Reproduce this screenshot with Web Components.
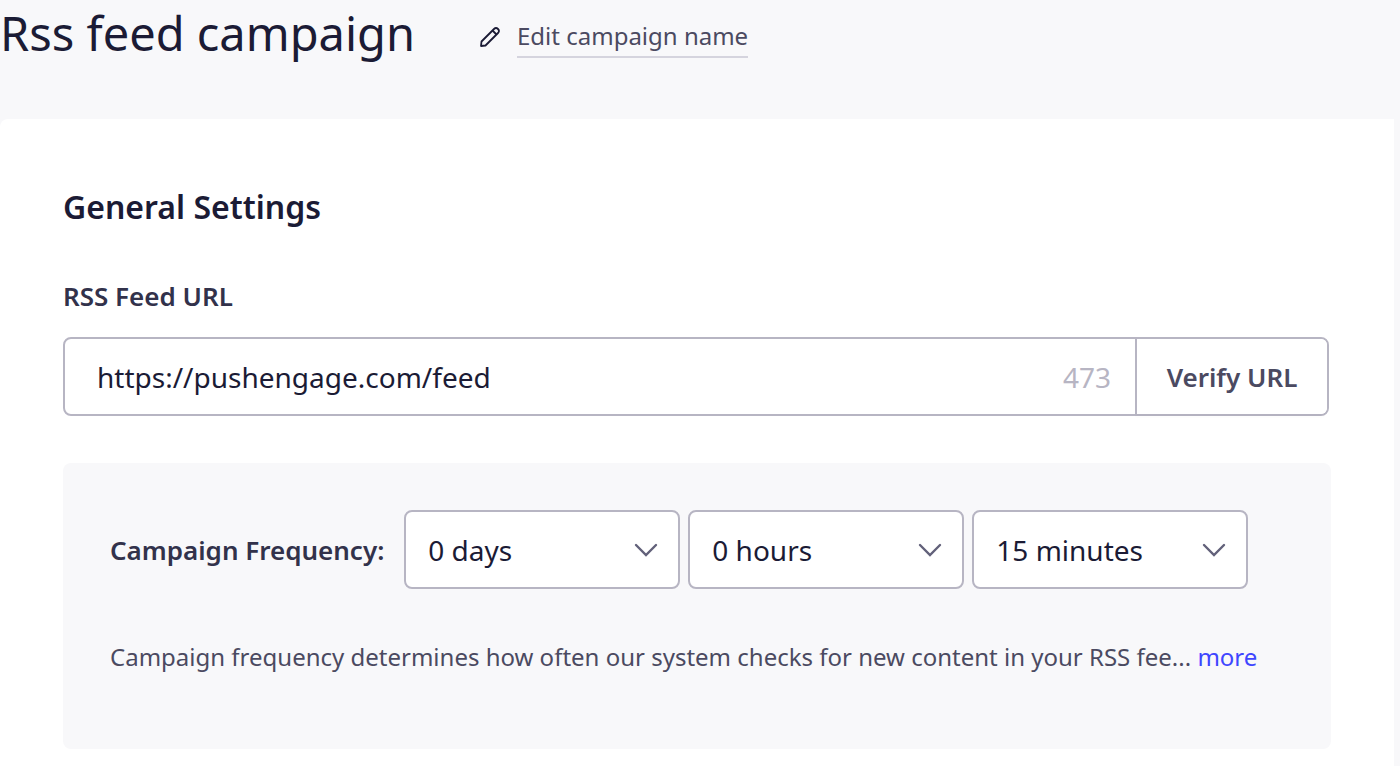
<!DOCTYPE html>
<html lang="en">
<head>
  <meta charset="utf-8">
  <meta name="viewport" content="width=device-width, initial-scale=1">
  <title>Rss feed campaign</title>
  <style>
    :root {
      --page: #f8f8fa;
      --ink: #1b1b35;
      --ink-label: #32324b;
      --ink-soft: #4b4a61;
      --line: #b7b5c3;
      --link: #3f46ff;
    }

    body {
      margin: 0;
      background: var(--page);
      color: var(--ink);
      font-family: 'Noto Sans', 'Open Sans', sans-serif;
    }
  </style>
</head>
<body>
  <campaign-page></campaign-page>

  <script>
    'use strict';

    (function() {
      class CampaignHeader extends HTMLElement {
        constructor() {
          super();
          const shadow = this.attachShadow({ mode: 'open' });
          shadow.innerHTML = `
            <style>
              :host {
                display: flex;
                align-items: flex-start;
                gap: 64px;
                height: 119px;
              }

              h1 {
                margin: 0;
                font-size: 47px;
                font-weight: 400;
                line-height: 66px;
              }

              .edit {
                display: flex;
                align-items: center;
                gap: 16px;
                padding-top: 16px;
                color: var(--ink);
                text-decoration: none;
              }

              .edit span {
                color: var(--ink-soft);
                font-size: 24px;
                line-height: 40px;
                border-bottom: 2px solid #d5d4de;
              }
            </style>
            <h1><slot></slot></h1>
            <a class="edit" href="#edit">
              <svg width="22" height="22" viewBox="0 0 22 22" fill="none" stroke="currentColor" stroke-width="1.8" stroke-linejoin="round" aria-hidden="true">
                <path d="M2 20 L2.500 15.500 L15 3 Q17 1 19 3 Q21 5 19 7 L6.500 19.500 Z"/>
                <path d="M13.500 4.500 L17.500 8.500"/>
              </svg>
              <span>Edit campaign name</span>
            </a>
          `;
        }
      }

      class SettingsCard extends HTMLElement {
        constructor() {
          super();
          const shadow = this.attachShadow({ mode: 'open' });
          shadow.innerHTML = `
            <style>
              :host {
                display: block;
                box-sizing: border-box;
                min-height: calc(100vh - 119px);
                margin-right: 6px;
                padding: 64px 63px 16px;
                background: #fff;
                border-radius: 8px 0 0 0;
              }

              h2 {
                margin: 0 0 44px;
                font-size: 32px;
                font-weight: 600;
                line-height: 48px;
              }
            </style>
            <h2>${this.getAttribute('heading')}</h2>
            <slot></slot>
          `;
        }
      }

      class FeedUrlField extends HTMLElement {
        constructor() {
          super();
          const shadow = this.attachShadow({ mode: 'open' });
          shadow.innerHTML = `
            <style>
              :host {
                display: block;
                margin-bottom: 47px;
              }

              label {
                display: block;
                margin-bottom: 20px;
                color: var(--ink-label);
                font-size: 26px;
                font-weight: 600;
                line-height: 42px;
              }

              .group {
                display: flex;
                box-sizing: border-box;
                height: 79px;
                margin-right: 2px;
                border: 2px solid var(--line);
                border-radius: 8px;
              }

              input {
                flex: 1;
                min-width: 0;
                padding: 0 0 0 32px;
                border: 0;
                outline: none;
                background: none;
                color: var(--ink);
                font: inherit;
                font-size: 28px;
              }

              .count {
                align-self: center;
                padding: 0 24px;
                color: var(--line);
                font-size: 28px;
              }

              button {
                width: 192px;
                padding: 0;
                border: 0;
                border-left: 2px solid var(--line);
                border-radius: 0 6px 6px 0;
                background: #fff;
                box-shadow: 0 4px 2px rgba(0, 0, 0, 0.01);
                color: var(--ink-soft);
                font: inherit;
                font-size: 26px;
                font-weight: 600;
                cursor: pointer;
              }
            </style>
            <label for="url">RSS Feed URL</label>
            <div class="group">
              <input id="url" type="text" maxlength="500">
              <span class="count"></span>
              <button type="button">Verify URL</button>
            </div>
          `;
          this.input = shadow.querySelector('input');
          this.count = shadow.querySelector('.count');
        }

        connectedCallback() {
          this.input.value = this.getAttribute('value') || '';
          this.input.addEventListener('input', () => this.updateCount());
          this.updateCount();
        }

        // characters left before the limit
        updateCount() {
          this.count.textContent = this.input.maxLength - this.input.value.length;
        }
      }

      // draws the box and the arrow around a native select
      class SelectBox extends HTMLElement {
        constructor() {
          super();
          const shadow = this.attachShadow({ mode: 'open' });
          shadow.innerHTML = `
            <style>
              :host {
                display: grid;
                flex: 0 1 276px;
                align-items: center;
              }

              ::slotted(select) {
                grid-area: 1 / 1;
                appearance: none;
                box-sizing: border-box;
                width: 100%;
                height: 79px;
                margin: 0;
                padding: 0 56px 0 22px;
                border: 2px solid var(--line);
                border-radius: 8px;
                background: #fff;
                color: var(--ink);
                font: inherit;
                font-size: 28px;
              }

              svg {
                grid-area: 1 / 1;
                justify-self: end;
                margin-right: 22px;
                z-index: 1;
                pointer-events: none;
              }
            </style>
            <slot></slot>
            <svg width="24" height="14" viewBox="0 0 24 14" fill="none" stroke="#62617a" stroke-width="2.400" stroke-linecap="round" aria-hidden="true">
              <path d="M2 2 L12 12 L22 2"/>
            </svg>
          `;
        }
      }

      class CampaignFrequency extends HTMLElement {
        constructor() {
          super();
          const shadow = this.attachShadow({ mode: 'open' });
          shadow.innerHTML = `
            <style>
              :host {
                display: block;
                padding: 47px 47px 71px;
                border-radius: 8px;
                background: var(--page);
              }

              .row {
                display: flex;
                align-items: center;
                gap: 8px;
                margin-bottom: 47px;
              }

              label {
                margin-right: 12px;
                color: var(--ink-label);
                font-size: 26px;
                font-weight: 600;
                white-space: nowrap;
              }

              p {
                margin: 0;
                color: var(--ink-soft);
                font-size: 24px;
                line-height: 42px;
              }

              a {
                color: var(--link);
                text-decoration: none;
              }
            </style>
            <div class="row">
              <label for="days">Campaign Frequency:</label>
              <select-box><select id="days" aria-label="Campaign Frequency: days"><option>0 days</option><option>1 days</option></select></select-box>
              <select-box><select id="hours" aria-label="Campaign Frequency: hours"><option>0 hours</option><option>1 hours</option></select></select-box>
              <select-box><select id="minutes" aria-label="Campaign Frequency: minutes"><option>15 minutes</option><option>30 minutes</option></select></select-box>
            </div>
            <p>Campaign frequency determines how often our system checks for new content in your RSS fee... <a href="#more">more</a></p>
          `;
        }
      }

      class CampaignPage extends HTMLElement {
        constructor() {
          super();
          const shadow = this.attachShadow({ mode: 'open' });
          shadow.innerHTML = `
            <style>
              :host {
                display: block;
              }
            </style>
            <campaign-header>Rss feed campaign</campaign-header>
            <settings-card heading="General Settings">
              <feed-url-field value="https://pushengage.com/feed"></feed-url-field>
              <campaign-frequency></campaign-frequency>
            </settings-card>
          `;
        }
      }

      customElements.define('campaign-header', CampaignHeader);
      customElements.define('settings-card', SettingsCard);
      customElements.define('feed-url-field', FeedUrlField);
      customElements.define('select-box', SelectBox);
      customElements.define('campaign-frequency', CampaignFrequency);
      customElements.define('campaign-page', CampaignPage);
    })();
  </script>
</body>
</html>
